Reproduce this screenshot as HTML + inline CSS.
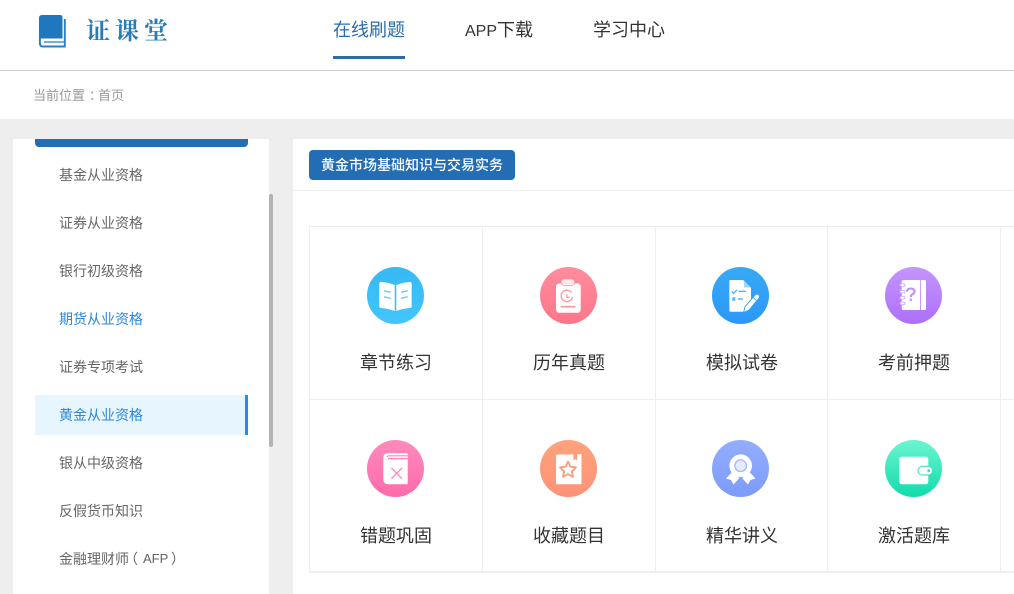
<!DOCTYPE html>
<html lang="zh"><head><meta charset="utf-8">
<style>
html,body{margin:0;padding:0;width:1014px;height:594px;overflow:hidden;background:#fff}
body{position:relative;font-family:"Liberation Sans","Noto Sans CJK SC",sans-serif}
.a{position:absolute}
.t{position:absolute;white-space:nowrap}
.nav{font-size:18px;line-height:24px;top:18px;color:#333}
.side{left:59px;font-size:14px;line-height:20px;color:#666}
.lab{font-size:18px;line-height:24px;color:#333;width:172px;text-align:center}
.v{position:absolute;width:1px;background:#eee;top:227px;height:345px}
.h{position:absolute;height:1px;background:#eee;left:309px;width:705px}
svg.i{position:absolute;width:57px;height:57px}
</style></head><body>
<svg class="a" style="left:38px;top:14px" width="29" height="34" viewBox="0 0 29 34">
<path d="M1 24.500V4Q1 1 4 1H22Q24.500 1 24.500 3.500V24.500H5Q1 24.500 1 26Z" fill="#2177bd"/>
<path d="M1.900 24V29.500Q1.900 32.500 5 32.500H26.800V5" fill="none" stroke="#2a7fc0" stroke-width="1.900"/>
<path d="M6 28H26" stroke="#4b95cc" stroke-width="1.400"/>
</svg>
<div class="t" style="left:86px;top:15px;font-family:'Liberation Serif','Noto Serif CJK SC',serif;font-size:24px;line-height:34px;letter-spacing:5px;color:#2a7cb9;font-weight:700">证课堂</div>
<div class="t nav" style="left:333px;color:#2b6cab">在线刷题</div>
<div class="t nav" style="left:465px"><span style="font-size:16px">APP</span>下载</div>
<div class="t nav" style="left:593px">学习中心</div>
<div class="a" style="left:333px;top:56px;width:72px;height:3px;background:#2b6ca8"></div>
<div class="a" style="left:0;top:70px;width:1014px;height:1px;background:#ccc"></div>
<div class="t" style="left:33px;top:87px;font-size:13px;line-height:18px;color:#999">当前位置<span style="position:relative;left:4px">：</span>首页</div>

<div class="a" style="left:0;top:119px;width:1014px;height:475px;background:#eee"></div>
<div class="a" style="left:13px;top:139px;width:256px;height:455px;background:#fff"></div>
<div class="a" style="left:269px;top:194px;width:4px;height:253px;background:#b4b4b4;border-radius:2px"></div>
<div class="a" style="left:35px;top:139px;width:213px;height:8px;background:#236db4;border-radius:0 0 4px 4px"></div>
<div class="a" style="left:35px;top:395px;width:210px;height:40px;background:#e6f5fe;border-right:3px solid #1f8fee"></div>
<div class="t side" style="top:165px">基金从业资格</div>
<div class="t side" style="top:213px">证券从业资格</div>
<div class="t side" style="top:261px">银行初级资格</div>
<div class="t side" style="top:309px;color:#2f86d9">期货从业资格</div>
<div class="t side" style="top:357px">证券专项考试</div>
<div class="t side" style="top:405px;color:#2f86d9">黄金从业资格</div>
<div class="t side" style="top:453px">银从中级资格</div>
<div class="t side" style="top:501px">反假货币知识</div>
<div class="t side" style="top:549px">金融理财师</div>
<div class="t side" style="top:549px;left:124px">（</div>
<div class="t side" style="top:549px;left:143px;font-size:13px;letter-spacing:0">AFP</div>
<div class="t side" style="top:549px;left:171px">）</div>

<div class="a" style="left:293px;top:139px;width:721px;height:455px;background:#fff"></div>
<div class="a" style="left:309px;top:150px;width:206px;height:30px;background:#236db4;border-radius:4px"></div>
<div class="t" style="left:321px;top:155px;font-size:14px;line-height:20px;color:#fff;font-weight:500">黄金市场基础知识与交易实务</div>
<div class="a" style="left:293px;top:190px;width:721px;height:1px;background:#f0f0f0"></div>

<div class="h" style="top:226px"></div>
<div class="h" style="top:399px"></div>
<div class="h" style="top:571px;height:2px"></div>
<div class="v" style="left:309px"></div>
<div class="v" style="left:482px"></div>
<div class="v" style="left:655px"></div>
<div class="v" style="left:827px"></div>
<div class="v" style="left:1000px"></div>

<svg style="position:absolute;width:0;height:0"><defs>
<linearGradient id="g1" x1="0" y1="0" x2="0" y2="1"><stop offset="0" stop-color="#37b9f3"/><stop offset="1" stop-color="#40c6fd"/></linearGradient>
<linearGradient id="g2" x1="0" y1="0" x2="0" y2="1"><stop offset="0" stop-color="#fe8d9d"/><stop offset="1" stop-color="#fe7589"/></linearGradient>
<linearGradient id="g3" x1="0" y1="0" x2="0" y2="1"><stop offset="0" stop-color="#38a9f5"/><stop offset="1" stop-color="#2a98fb"/></linearGradient>
<linearGradient id="g4" x1="0" y1="0" x2="0" y2="1"><stop offset="0" stop-color="#c595fd"/><stop offset="1" stop-color="#ad6ffc"/></linearGradient>
<linearGradient id="g5" x1="0" y1="0" x2="0" y2="1"><stop offset="0" stop-color="#fe8bbc"/><stop offset="1" stop-color="#fe6baa"/></linearGradient>
<linearGradient id="g6" x1="0" y1="0" x2="0" y2="1"><stop offset="0" stop-color="#fea27c"/><stop offset="1" stop-color="#fe9277"/></linearGradient>
<linearGradient id="g7" x1="0" y1="0" x2="0" y2="1"><stop offset="0" stop-color="#93aefc"/><stop offset="1" stop-color="#7c9bfb"/></linearGradient>
<linearGradient id="g8" x1="0" y1="0" x2="0" y2="1"><stop offset="0" stop-color="#6cf5d0"/><stop offset="1" stop-color="#10dcaa"/></linearGradient>
</defs></svg>

<!-- 章节练习 -->
<svg class="i" style="left:367px;top:267px" viewBox="0 0 57 57"><circle cx="28.500" cy="28.500" r="28.500" fill="url(#g1)"/>
<path d="M14 15Q22 15.500 27.700 18V44Q21 41.500 14 41Q12.300 41 12.300 39V17Q12.300 15 14 15Z" fill="#fff"/>
<path d="M43 15Q35 15.500 29.300 18V44Q36 41.500 43 41Q44.700 41 44.700 39V17Q44.700 15 43 15Z" fill="#fff"/>
<path d="M17 23.800L23.700 25.300M17 29.800L23.700 31.300M34 25.300L40.700 23.800M34 31.300L40.700 29.800" stroke="#6ccbf6" stroke-width="1.500" fill="none"/></svg>
<!-- 历年真题 -->
<svg class="i" style="left:540px;top:267px" viewBox="0 0 57 57"><circle cx="28.500" cy="28.500" r="28.500" fill="url(#g2)"/>
<rect x="16" y="16.500" width="24.700" height="29.200" rx="3" fill="#fff"/>
<rect x="21.200" y="12" width="13.400" height="6.600" rx="3" fill="#ffe6ea" stroke="#fe8d9d" stroke-width=".6"/>
<path d="M31.500 25.500A5.700 5.700 0 1 0 32.500 30" fill="none" stroke="#fe97a6" stroke-width="1.400"/>
<path d="M26.800 27V30.300H30" fill="none" stroke="#fe97a6" stroke-width="1.200"/>
<path d="M20.700 39.700H35.300" stroke="#fe8d9d" stroke-width="1.400"/></svg>
<!-- 模拟试卷 -->
<svg class="i" style="left:712px;top:267px" viewBox="0 0 57 57"><circle cx="28.500" cy="28.500" r="28.500" fill="url(#g3)"/>
<path d="M18.800 13H31L39 21V35L31 44.700H18.800Q17.300 44.700 17.300 43.200V14.500Q17.300 13 18.800 13Z" fill="#fff"/>
<path d="M32 13.500V20.500H39Z" fill="#a5d5fa"/>
<path d="M19.700 24.500L21.500 26.300L25 23M26.500 24.300H34" fill="none" stroke="#5ab2f6" stroke-width="1.400"/>
<rect x="20.300" y="30.300" width="3" height="3.400" fill="#5ab2f6"/><path d="M26 32H31" stroke="#5ab2f6" stroke-width="1.400"/>
<path d="M43.500 27.500Q45.500 26.500 47 28Q48 29.500 47 31L37 43L31.800 45.500L32.800 40Z" fill="#fff" stroke="#35a2f6" stroke-width=".9"/>
<path d="M41 30.500L44.500 33.500" stroke="#5ab2f6" stroke-width="1"/></svg>
<!-- 考前押题 -->
<svg class="i" style="left:885px;top:267px" viewBox="0 0 57 57"><circle cx="28.500" cy="28.500" r="28.500" fill="url(#g4)"/>
<path d="M18.500 13H35V43H18.500Q16.700 43 16.700 41.200V14.800Q16.700 13 18.500 13Z" fill="#fff"/>
<path d="M35.800 13H39.300Q41 13 41 14.800V41.200Q41 43 39.300 43H35.800Z" fill="#fff"/>
<g fill="#fff" stroke="#cfa6fd" stroke-width=".8"><rect x="15" y="16.800" width="5" height="2.600" rx="1.300"/><rect x="15" y="23.400" width="5" height="2.600" rx="1.300"/><rect x="15" y="29.400" width="5" height="2.600" rx="1.300"/><rect x="15" y="35.100" width="5" height="2.600" rx="1.300"/></g>
<path d="M22 24.500Q22 21.500 25.800 21.500Q29.500 21.500 29.500 24.500Q29.500 26.300 27.500 27.300Q25.800 28.200 25.800 30M25.800 31.500V34" fill="none" stroke="#c08efc" stroke-width="2"/></svg>
<!-- 错题巩固 -->
<svg class="i" style="left:367px;top:440px" viewBox="0 0 57 57"><circle cx="28.500" cy="28.500" r="28.500" fill="url(#g5)"/>
<path d="M16.300 18Q16.300 13.300 21 13.300H40.700V44.300H21.500Q16.300 44.300 16.300 39Z" fill="#fff"/>
<path d="M20 17Q20.500 15.800 22 15.800H40.700M21 18.600H40.700" fill="none" stroke="#fe85b9" stroke-width="1.200"/>
<path d="M24.400 28L35 38.600M35 28L24.400 38.600" stroke="#fb8fbd" stroke-width="1.400"/></svg>
<!-- 收藏题目 -->
<svg class="i" style="left:540px;top:440px" viewBox="0 0 57 57"><circle cx="28.500" cy="28.500" r="28.500" fill="url(#g6)"/>
<path d="M17.500 14.500H33.500V20.500L35.300 19L37.200 20.500V14.300H41.500V44.300H16V16Q16 14.500 17.500 14.500Z" fill="#fff"/>
<path d="M28 21.500L30.400 26.700L36 27.400L31.900 31.300L33 36.900L28 34.100L23 36.900L24.100 31.300L20 27.400L25.600 26.700Z" fill="none" stroke="#fe9c7b" stroke-width="1.800" stroke-linejoin="round"/></svg>
<!-- 精华讲义 -->
<svg class="i" style="left:712px;top:440px" viewBox="0 0 57 57"><circle cx="28.500" cy="28.500" r="28.500" fill="url(#g7)"/>
<path d="M20 32L14 38.500L19 40L21.500 44.500L27.500 38Z M37.500 32L43.500 38.500L38.500 40L36 44.500L30 38Z" fill="#fff"/>
<circle cx="28.700" cy="25.700" r="11.300" fill="#fff"/>
<circle cx="28.700" cy="25.700" r="5.800" fill="#e6ecfe" stroke="#a3b8fc" stroke-width="1.300"/></svg>
<!-- 激活题库 -->
<svg class="i" style="left:885px;top:440px" viewBox="0 0 57 57"><circle cx="28.500" cy="28.500" r="28.500" fill="url(#g8)"/>
<rect x="14.300" y="16.700" width="29" height="27.600" rx="2.500" fill="#fff"/>
<rect x="33" y="26.400" width="14.500" height="8.600" rx="4.300" fill="#fff" stroke="#4fe6c0" stroke-width="1.200"/>
<circle cx="43.800" cy="30.700" r="1.500" fill="#3fe3ba"/></svg>

<div class="t lab" style="left:310px;top:351px">章节练习</div>
<div class="t lab" style="left:483px;top:351px">历年真题</div>
<div class="t lab" style="left:656px;top:351px">模拟试卷</div>
<div class="t lab" style="left:828px;top:351px">考前押题</div>
<div class="t lab" style="left:310px;top:524px">错题巩固</div>
<div class="t lab" style="left:483px;top:524px">收藏题目</div>
<div class="t lab" style="left:656px;top:524px">精华讲义</div>
<div class="t lab" style="left:828px;top:524px">激活题库</div>
</body></html>
